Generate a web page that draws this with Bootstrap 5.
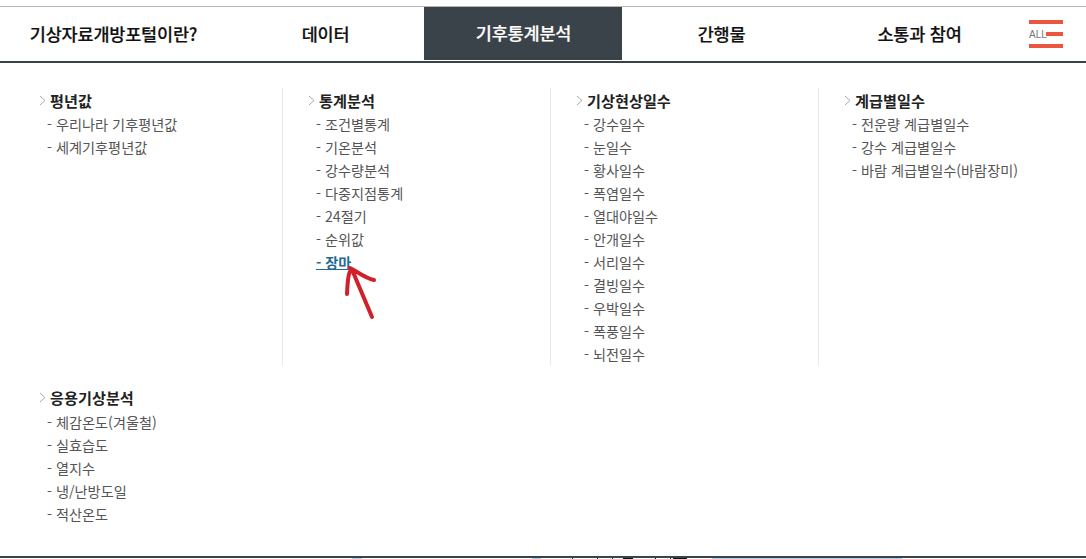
<!DOCTYPE html>
<html lang="ko">
<head>
<meta charset="utf-8">
<link rel="stylesheet" href="https://cdn.jsdelivr.net/npm/bootstrap@5.3.0/dist/css/bootstrap.min.css">
<style>
html,body{height:559px;overflow:hidden;background:#fff}
body{font-family:"Noto Sans CJK KR","Noto Sans",sans-serif;position:relative}
.gnb{margin-top:6px;height:57px;border-top:1px solid #b5b5b5;border-bottom:2px solid #3a424a}
.gnb-item{font-size:17.5px;font-weight:500;color:#111;letter-spacing:-.2px;height:100%;width:198px;flex:none;padding-left:1px;-webkit-text-stroke:.2px currentColor}
.gnb-1{width:226px}
.gnb-on{background:#3a424a;color:#fff;height:calc(100% - 1px);align-self:flex-start}
.all-ico{width:34px;height:28px;margin:13px 0 0 11px;position:relative;align-self:flex-start;flex:none}
.all-bar{position:absolute;right:0;background:#ea5640;height:4px}
.all-t{position:absolute;left:0;top:9px;font:10px/11px "Liberation Sans",sans-serif;color:#777}
.mega{padding:25px 0 0 37px}
.group{width:268px;height:277px;padding:1px 0 0 24px;flex:none}
.group+.group{border-left:1px solid #e8e8e8}
.group:first-child{width:245px;padding-left:1px}
.g-title{font-size:15.2px;font-weight:700;color:#222;line-height:23px;display:flex;align-items:center}
.g-title svg{margin-right:3px}
.g-list{list-style:none;margin:1px 0 0;padding:0 0 0 9px}
.g-list li{font-size:14.2px;line-height:23px;color:#555;height:23px;white-space:nowrap}
.g-list a{color:inherit;text-decoration:none}
.g-list a.on{color:#1f6a94;font-weight:700;text-decoration:underline}
.second{padding:21px 0 0 38px}
.second .g-list{margin-top:2px}
.foot-bar{position:absolute;left:0;right:0;bottom:1px;height:2px;background:#3a424a}
.foot-pic{position:absolute;bottom:0;left:0;right:0;height:1px;background:linear-gradient(90deg,#fff 0 352px,#b8cfe0 352px 362px,#fff 362px 532px,#b8cfe0 532px 541px,#fff 541px 572px,#111 572px 573px,#fff 573px 597px,#111 597px 598px,#fff 598px 612px,#111 612px 613px,#fff 613px 623px,#111 623px 633px,#fff 633px 655px,#111 655px 656px,#fff 656px 670px,#111 670px 671px,#fff 671px 673px,#111 673px 687px,#fff 687px 712px,#b8cfe0 712px 902px,#fff 902px)}
.arrow{position:absolute;left:340px;top:265px}
</style>
</head>
<body>
<nav class="gnb d-flex align-items-center">
 <div class="gnb-item gnb-1 d-flex align-items-center justify-content-center">기상자료개방포털이란?</div>
 <div class="gnb-item d-flex align-items-center justify-content-center">데이터</div>
 <div class="gnb-item gnb-on d-flex align-items-center justify-content-center">기후통계분석</div>
 <div class="gnb-item d-flex align-items-center justify-content-center">간행물</div>
 <div class="gnb-item d-flex align-items-center justify-content-center">소통과 참여</div>
 <div class="all-ico"><span class="all-bar" style="top:0;width:34px"></span><span class="all-bar" style="top:12px;width:17px"></span><span class="all-bar" style="top:24px;width:34px"></span><span class="all-t">ALL</span></div>
</nav>
<div class="mega d-flex">
 <section class="group">
  <div class="g-title"><svg width="9" height="11" viewBox="0 0 9 11"><path d="M2 1l5 4.5L2 10" fill="none" stroke="#aaa"/></svg>평년값</div>
  <ul class="g-list"><li><a href="#">- 우리나라 기후평년값</a></li><li><a href="#">- 세계기후평년값</a></li></ul>
 </section>
 <section class="group">
  <div class="g-title"><svg width="9" height="11" viewBox="0 0 9 11"><path d="M2 1l5 4.5L2 10" fill="none" stroke="#aaa"/></svg>통계분석</div>
  <ul class="g-list"><li><a href="#">- 조건별통계</a></li><li><a href="#">- 기온분석</a></li><li><a href="#">- 강수량분석</a></li><li><a href="#">- 다중지점통계</a></li><li><a href="#">- 24절기</a></li><li><a href="#">- 순위값</a></li><li><a class="on" href="#">- 장마</a></li></ul>
 </section>
 <section class="group">
  <div class="g-title"><svg width="9" height="11" viewBox="0 0 9 11"><path d="M2 1l5 4.5L2 10" fill="none" stroke="#aaa"/></svg>기상현상일수</div>
  <ul class="g-list"><li><a href="#">- 강수일수</a></li><li><a href="#">- 눈일수</a></li><li><a href="#">- 황사일수</a></li><li><a href="#">- 폭염일수</a></li><li><a href="#">- 열대야일수</a></li><li><a href="#">- 안개일수</a></li><li><a href="#">- 서리일수</a></li><li><a href="#">- 결빙일수</a></li><li><a href="#">- 우박일수</a></li><li><a href="#">- 폭풍일수</a></li><li><a href="#">- 뇌전일수</a></li></ul>
 </section>
 <section class="group">
  <div class="g-title"><svg width="9" height="11" viewBox="0 0 9 11"><path d="M2 1l5 4.5L2 10" fill="none" stroke="#aaa"/></svg>계급별일수</div>
  <ul class="g-list"><li><a href="#">- 전운량 계급별일수</a></li><li><a href="#">- 강수 계급별일수</a></li><li><a href="#">- 바람 계급별일수(바람장미)</a></li></ul>
 </section>
</div>
<div class="second">
 <section>
  <div class="g-title"><svg width="9" height="11" viewBox="0 0 9 11"><path d="M2 1l5 4.5L2 10" fill="none" stroke="#aaa"/></svg>응용기상분석</div>
  <ul class="g-list"><li><a href="#">- 체감온도(겨울철)</a></li><li><a href="#">- 실효습도</a></li><li><a href="#">- 열지수</a></li><li><a href="#">- 냉/난방도일</a></li><li><a href="#">- 적산온도</a></li></ul>
 </section>
</div>
<svg class="arrow" width="40" height="60" viewBox="0 0 40 60"><path d="M32 52L13 7C11 3 8 4 7 29M10 3C18 7 25 13 34 15" fill="none" stroke="#d0202a" stroke-width="4" stroke-linecap="round" stroke-linejoin="round"/></svg>
<div class="foot-bar"></div><div class="foot-pic"></div>
</body>
</html>
